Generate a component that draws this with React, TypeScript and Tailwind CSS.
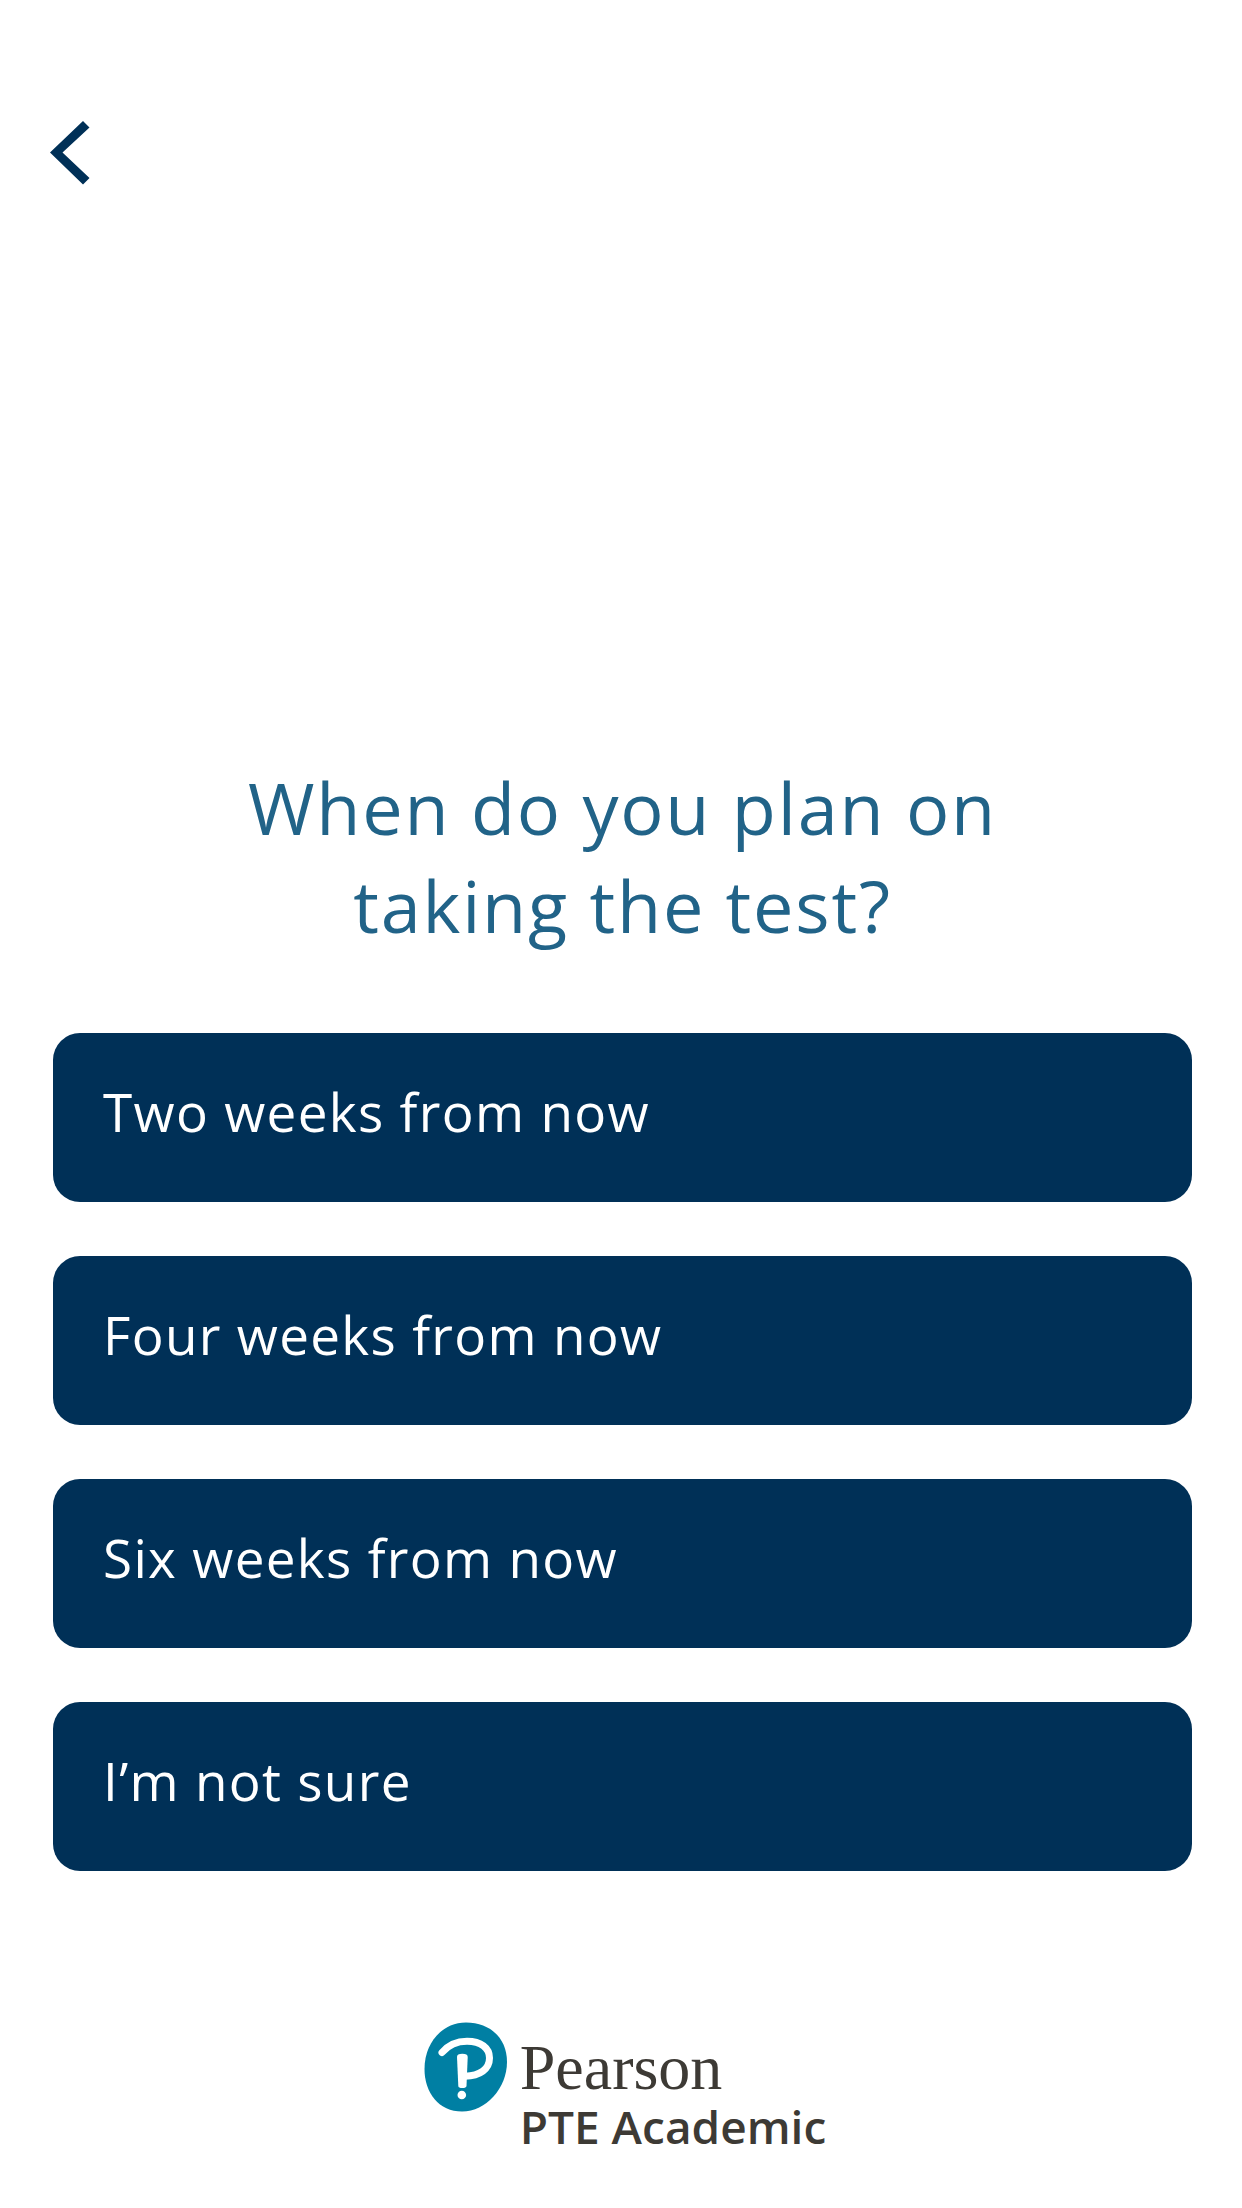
import { useState } from 'react';

const options = [
  'Two weeks from now',
  'Four weeks from now',
  'Six weeks from now',
  'I’m not sure',
];

function BackButton() {
  return (
    <button type="button" aria-label="Back" className="cursor-pointer">
      <svg width="40" height="64" viewBox="0 0 40 64" fill="#003057">
        <path d="M33 0 L39.5 6.5 L12.5 31.5 L39.5 57 L33 63.5 L0 31.5 Z" />
      </svg>
    </button>
  );
}

function PearsonLogo() {
  return (
    <div className="flex items-start gap-3 text-[#3d3a35]">
      <svg width="84" height="90" viewBox="0 0 84 90" className="shrink-0" aria-hidden="true">
        <path
          d="M42 0.5 C66 0.5 83 16 83 40 C83 66 62 89.5 38 89.5 C15 89.5 0.5 71 0.5 47 C0.5 21 18 0.5 42 0.5 Z"
          fill="#007fa3"
        />
        <path
          d="M18 30.5 C24 23.5 32 19.3 43 19.3 C57 19.3 65.5 26 65.5 36 C65.5 47 56 54 41 54.2"
          fill="none"
          stroke="#fff"
          strokeWidth="7"
          strokeLinecap="round"
        />
        <path d="M33 35 Q33 31.7 38.3 31.7 Q43.8 31.7 43.7 35 L42.5 64 Q42 66 38.4 66 Q34.4 66 34.3 64 Z" fill="#fff" />
        <circle cx="37.8" cy="73" r="4.3" fill="#fff" />
      </svg>
      <div className="pt-3">
        <p className="font-['Liberation_Serif',serif] text-[64px] leading-[68px]">Pearson</p>
        <p className="text-[46px] font-semibold leading-[48px]">PTE Academic</p>
      </div>
    </div>
  );
}

export default function App() {
  const [selected, setSelected] = useState<string | null>(null);

  return (
    <div className="flex min-h-screen flex-col bg-white font-['Open_Sans',sans-serif]">
      <header className="flex px-[50px] pt-[121px]">
        <BackButton />
      </header>

      <main className="mt-[573px] pr-[50px] pl-[53px]">
        <h1 className="text-center text-7xl leading-[98px] tracking-wide text-[#216388]">
          When do you plan on
          <br />
          taking the test?
        </h1>

        <div className="mt-[79px] flex flex-col gap-[54px]">
          {options.map((option) => (
            <button
              key={option}
              type="button"
              aria-pressed={selected === option}
              onClick={() => setSelected(option)}
              className="w-full cursor-pointer rounded-[27px] bg-[#003057] px-[50px] pt-[42px] pb-[54px] text-left text-[53px] leading-[73px] tracking-wide text-white"
            >
              {option}
            </button>
          ))}
        </div>
      </main>

      <footer className="mt-[151px] flex justify-center pl-2">
        <PearsonLogo />
      </footer>
    </div>
  );
}
